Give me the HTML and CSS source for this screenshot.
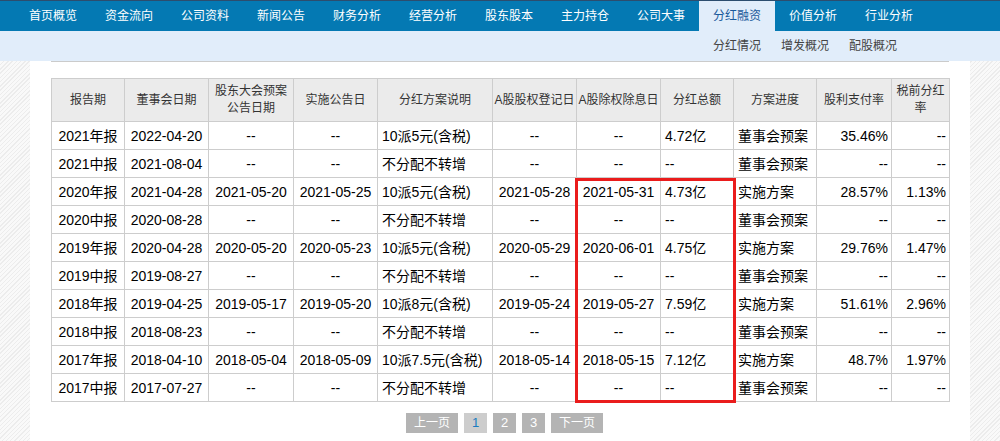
FILE: index.html
```html
<!DOCTYPE html>
<html lang="zh-CN">
<head>
<meta charset="utf-8">
<title>分红融资</title>
<link rel="stylesheet" href="styles.css">
</head>
<body>
<div class="header">
  <ul class="nav">
    <li>首页概览</li>
    <li>资金流向</li>
    <li>公司资料</li>
    <li>新闻公告</li>
    <li>财务分析</li>
    <li>经营分析</li>
    <li>股东股本</li>
    <li>主力持仓</li>
    <li>公司大事</li>
    <li class="active">分红融资</li>
    <li>价值分析</li>
    <li>行业分析</li>
  </ul>
  <div class="subnav">
    <span>分红情况</span>
    <span>增发概况</span>
    <span>配股概况</span>
  </div>
</div>
<div class="main">
  <div class="section">
    <table class="data">
      <colgroup>
        <col style="width:73px"><col style="width:84px"><col style="width:85px"><col style="width:84px"><col style="width:115px"><col style="width:84px"><col style="width:84px"><col style="width:73px"><col style="width:83px"><col style="width:75px"><col style="width:58px">
      </colgroup>
      <thead>
        <tr>
          <th>报告期</th><th>董事会日期</th><th>股东大会预案<br>公告日期</th><th>实施公告日</th><th>分红方案说明</th><th>A股股权登记日</th><th>A股除权除息日</th><th>分红总额</th><th>方案进度</th><th>股利支付率</th><th>税前分红<br>率</th>
        </tr>
      </thead>
      <tbody>
        <tr><td>2021年报</td><td>2022-04-20</td><td>--</td><td>--</td><td class="l">10派5元(含税)</td><td>--</td><td>--</td><td class="l">4.72亿</td><td class="l">董事会预案</td><td class="r">35.46%</td><td class="r">--</td></tr>
        <tr><td>2021中报</td><td>2021-08-04</td><td>--</td><td>--</td><td class="l">不分配不转增</td><td>--</td><td>--</td><td class="l">--</td><td class="l">董事会预案</td><td class="r">--</td><td class="r">--</td></tr>
        <tr><td>2020年报</td><td>2021-04-28</td><td>2021-05-20</td><td>2021-05-25</td><td class="l">10派5元(含税)</td><td>2021-05-28</td><td>2021-05-31</td><td class="l">4.73亿</td><td class="l">实施方案</td><td class="r">28.57%</td><td class="r">1.13%</td></tr>
        <tr><td>2020中报</td><td>2020-08-28</td><td>--</td><td>--</td><td class="l">不分配不转增</td><td>--</td><td>--</td><td class="l">--</td><td class="l">董事会预案</td><td class="r">--</td><td class="r">--</td></tr>
        <tr><td>2019年报</td><td>2020-04-28</td><td>2020-05-20</td><td>2020-05-23</td><td class="l">10派5元(含税)</td><td>2020-05-29</td><td>2020-06-01</td><td class="l">4.75亿</td><td class="l">实施方案</td><td class="r">29.76%</td><td class="r">1.47%</td></tr>
        <tr><td>2019中报</td><td>2019-08-27</td><td>--</td><td>--</td><td class="l">不分配不转增</td><td>--</td><td>--</td><td class="l">--</td><td class="l">董事会预案</td><td class="r">--</td><td class="r">--</td></tr>
        <tr><td>2018年报</td><td>2019-04-25</td><td>2019-05-17</td><td>2019-05-20</td><td class="l">10派8元(含税)</td><td>2019-05-24</td><td>2019-05-27</td><td class="l">7.59亿</td><td class="l">实施方案</td><td class="r">51.61%</td><td class="r">2.96%</td></tr>
        <tr><td>2018中报</td><td>2018-08-23</td><td>--</td><td>--</td><td class="l">不分配不转增</td><td>--</td><td>--</td><td class="l">--</td><td class="l">董事会预案</td><td class="r">--</td><td class="r">--</td></tr>
        <tr><td>2017年报</td><td>2018-04-10</td><td>2018-05-04</td><td>2018-05-09</td><td class="l">10派7.5元(含税)</td><td>2018-05-14</td><td>2018-05-15</td><td class="l">7.12亿</td><td class="l">实施方案</td><td class="r">48.7%</td><td class="r">1.97%</td></tr>
        <tr><td>2017中报</td><td>2017-07-27</td><td>--</td><td>--</td><td class="l">不分配不转增</td><td>--</td><td>--</td><td class="l">--</td><td class="l">董事会预案</td><td class="r">--</td><td class="r">--</td></tr>
      </tbody>
    </table>
    <div class="mark"></div>
    <div class="pager">
      <span class="btn">上一页</span>
      <span class="btn num cur">1</span>
      <span class="btn num">2</span>
      <span class="btn num">3</span>
      <span class="btn">下一页</span>
    </div>
  </div>
</div>
</body>
</html>
```

FILE: styles.css
```css
* { box-sizing: border-box; }
html, body {
  margin: 0;
  padding: 0;
}
body {
  font-family: "Liberation Sans", "Noto Sans CJK SC", sans-serif;
  font-size: 12px;
  color: #333;
  background-color: #f4f4f4;
  background-image: repeating-linear-gradient(-45deg, #f9f9f9 0, #f9f9f9 2px, #ececec 2px, #ececec 3px);
  min-height: 441px;
}
.header {
  border-top: 1px solid #2c4d6e;
}
.nav {
  list-style: none;
  margin: 0;
  padding: 0 0 0 15px;
  height: 30px;
  background: #0479b3;
  display: flex;
}
.nav li {
  width: 76px;
  height: 30px;
  line-height: 30px;
  text-align: center;
  color: #fff;
  font-size: 12px;
}
.nav li.active {
  background: #e1edfa;
  color: #19599a;
}
.subnav {
  height: 30px;
  background: #e1edfa;
  display: flex;
  gap: 20px;
  padding-left: 713px;
  line-height: 31px;
  color: #444;
}
.main {
  width: 940px;
  margin: 0 auto;
  background: #fff;
  padding: 0 21px 40px 21px;
  min-height: 380px;
}
.section {
  position: relative;
  border-top: 1px solid #cbcbcb;
  padding-top: 16px;
}
.data {
  border-collapse: collapse;
  table-layout: fixed;
  width: 898px;
}
.data th, .data td {
  border: 1px solid #cdcdcd;
  text-align: center;
  white-space: nowrap;
  overflow: hidden;
}
.data th {
  background: #ebebeb;
  font-weight: normal;
  font-size: 12px;
  color: #333;
  line-height: 17px;
  padding: 4px 0;
  height: 43px;
}
.data td {
  font-size: 14px;
  color: #000;
  height: 28px;
  line-height: 26px;
  padding: 0 2px;
}
.data td.l { text-align: left; padding-left: 4px; }
.data td.r { text-align: right; padding-right: 3px; }
.mark {
  position: absolute;
  left: 524px;
  top: 116px;
  width: 161px;
  height: 225px;
  border: 3px solid #ea1c1c;
}
.pager {
  display: flex;
  justify-content: center;
  gap: 6px;
  margin-top: 11px;
  padding-left: 9px;
}
.pager .btn {
  height: 20px;
  line-height: 20px;
  padding: 0 8px;
  background: #b4b4b4;
  color: #fff;
  font-size: 12px;
}
.pager .num {
  width: 23px;
  padding: 0;
  text-align: center;
  font-size: 13px;
}
.pager .cur {
  background: #cdcdcd;
  color: #1a7cc0;
}
```
